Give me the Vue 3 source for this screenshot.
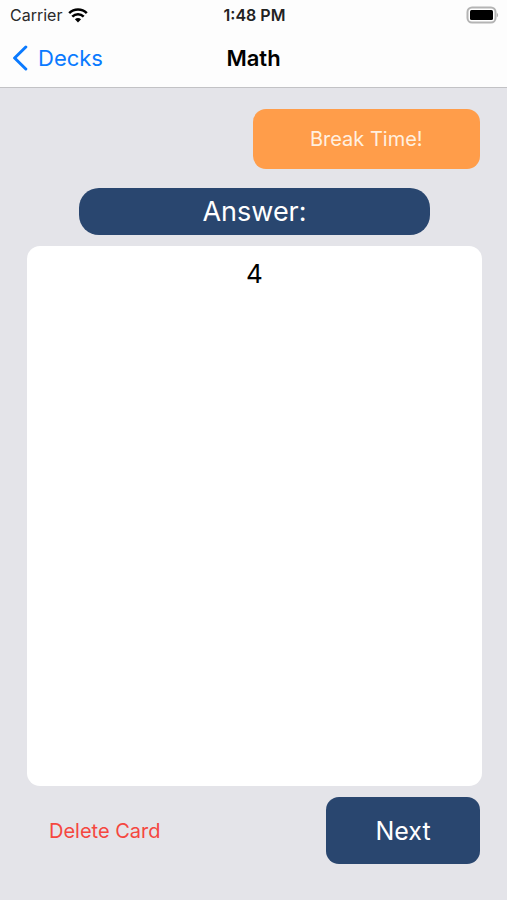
<script setup>
import { ref } from 'vue'

const deck = ref('Math')
const card = ref({ side: 'Answer:', text: '4' })
</script>

<template>
  <div class="screen">
    <header class="top">
      <div class="status">
        <div class="carrier">
          <span>Carrier</span>
          <svg class="wifi" viewBox="0 0 20 15" aria-hidden="true">
            <path d="M1.2 5.1a12.7 12.7 0 0 1 17.6 0" />
            <path d="M4.3 8.6a8.2 8.2 0 0 1 11.4 0" />
            <path class="dot" d="M6.9 11.3a4.6 4.6 0 0 1 6.2 0L10 14.6z" />
          </svg>
        </div>
        <time class="clock">1:48 PM</time>
        <svg class="battery" viewBox="0 0 33 18" aria-hidden="true">
          <rect class="shell" x="1.5" y="1.5" width="28" height="15" rx="4.5" />
          <rect x="4" y="4" width="23" height="10" rx="1.5" />
          <path class="cap" d="M30.8 6.7c1.8.8 1.8 3.8 0 4.6z" />
        </svg>
      </div>
      <nav class="nav">
        <a class="back" href="#decks">
          <svg class="chevron" viewBox="0 0 16 26" aria-hidden="true">
            <path d="M13.8 2L2.6 13l11.2 11" />
          </svg>
          <span>Decks</span>
        </a>
        <h1 class="title">{{ deck }}</h1>
      </nav>
    </header>

    <main class="content">
      <button class="break" type="button">Break Time!</button>
      <h2 class="side">{{ card.side }}</h2>
      <section class="card">{{ card.text }}</section>
      <div class="actions">
        <button class="delete" type="button">Delete Card</button>
        <button class="next" type="button">Next</button>
      </div>
    </main>
  </div>
</template>

<style>
body {
  margin: 0;
}
</style>

<style scoped>
.screen {
  display: flex;
  flex-direction: column;
  min-height: 100vh;
  background: #e4e4e9;
  color: #000;
  font-family: Inter, "Liberation Sans", sans-serif;
}
.top {
  background: #fdfdfd;
  border-bottom: 1px solid #c2c2c5;
}
.status,
.nav {
  display: grid;
  grid-template-columns: 1fr auto 1fr;
  align-items: center;
}
.status {
  height: 30px;
  padding: 0 8px 0 10px;
  font-size: 16px;
}
.carrier {
  display: flex;
  align-items: center;
  gap: 6px;
  color: #2a2a2a;
}
.wifi {
  width: 20px;
  height: 15px;
  fill: none;
  stroke: #000;
  stroke-width: 2.6;
}
.wifi .dot {
  fill: #000;
  stroke: none;
}
.clock {
  font-weight: 600;
  color: #222;
}
.battery {
  justify-self: end;
  width: 33px;
  height: 18px;
}
.battery .shell {
  fill: #fff;
  stroke: #b4b4b4;
  stroke-width: 2;
}
.battery .cap {
  fill: #b4b4b4;
}
.nav {
  height: 55px;
  padding: 0 12px 2px;
}
.back {
  display: flex;
  align-items: center;
  gap: 10px;
  color: #0a7aff;
  font-size: 22px;
  text-decoration: none;
}
.chevron {
  width: 16px;
  height: 26px;
  fill: none;
  stroke: currentColor;
  stroke-width: 3;
  stroke-linecap: round;
  stroke-linejoin: round;
}
.title {
  margin: 0;
  font-size: 22px;
  font-weight: 600;
}
.content {
  flex: 1;
  display: flex;
  flex-direction: column;
  padding: 21px 25px 36px 27px;
}
button {
  border: 0;
  padding: 0;
  font-family: inherit;
  cursor: pointer;
}
.break {
  align-self: flex-end;
  width: 50%;
  height: 60px;
  margin-right: 2px;
  border-radius: 13px;
  background: #ff9d4a;
  color: #fff0e0;
  font-size: 20px;
}
.side {
  align-self: center;
  width: 77%;
  margin: 19px 0 11px;
  border-radius: 20px;
  background: #29466f;
  color: #fff;
  font-size: 27px;
  font-weight: 400;
  line-height: 47px;
  text-align: center;
}
.card {
  flex: 1;
  border-radius: 13px;
  background: #fff;
  padding: 10px 16px;
  font-size: 26px;
  line-height: 36px;
  text-align: center;
}
.actions {
  display: flex;
  align-items: center;
  justify-content: space-between;
  margin-top: 11px;
  padding-right: 2px;
}
.delete {
  padding: 12px 22px;
  background: none;
  color: #f5473f;
  font-size: 20px;
}
.next {
  width: 34%;
  height: 67px;
  border-radius: 13px;
  background: #29466f;
  color: #fff;
  font-size: 25px;
}
</style>
